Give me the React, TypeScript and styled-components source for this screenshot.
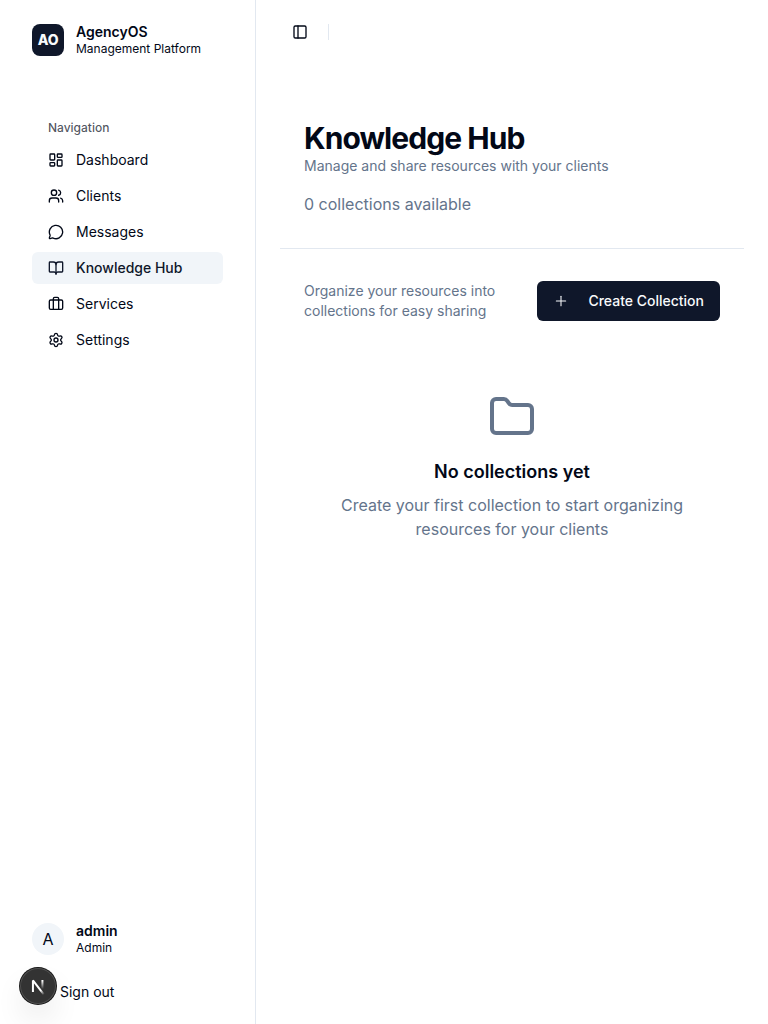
import React from "react";
import styled, { createGlobalStyle } from "styled-components";
import {
  BookOpen,
  Briefcase,
  Folder,
  LayoutDashboard,
  MessageCircle,
  PanelLeft,
  Plus,
  Settings,
  Users,
} from "lucide-react";

const ink = "#020817";
const navy = "#0f172a";
const muted = "#64748b";
const soft = "#f1f5f9";
const line = "#e2e8f0";

const GlobalStyle = createGlobalStyle`
  *, *::before, *::after { box-sizing: border-box; }
  body {
    margin: 0;
    background: #fff;
    color: ${ink};
    font-family: Inter, "Liberation Sans", sans-serif;
    font-size: 16px;
    line-height: 24px;
  }
  h1, h3, p { margin: 0; }
  button { font: inherit; border: 0; background: none; color: inherit; padding: 0; cursor: pointer; }
`;

const Layout = styled.div`
  display: flex;
  height: 100vh;
  overflow: hidden;
`;

const Sidebar = styled.aside`
  display: flex;
  flex-direction: column;
  flex: 0 0 256px;
  padding: 24px 32px 16px;
  border-right: 1px solid #e2e8f0;
`;

const Identity = styled.div`
  display: flex;
  align-items: center;
  gap: 12px;
  height: 32px;
`;

const Logo = styled.div`
  display: grid;
  place-items: center;
  width: 32px;
  height: 32px;
  border-radius: 8px;
  background: ${navy};
  color: #f8fafc;
  font-size: 14px;
  font-weight: 800;
  letter-spacing: -0.3px;
`;

const Avatar = styled.div`
  display: grid;
  place-items: center;
  width: 32px;
  height: 32px;
  border-radius: 50%;
  background: ${soft};
`;

const IdentityText = styled.div`
  display: flex;
  flex-direction: column;
  font-size: 12px;
  line-height: 16px;
`;

const IdentityName = styled.span`
  font-size: 14px;
  line-height: 17.5px;
  font-weight: 600;
`;

const NavLabel = styled.div`
  margin-top: 56px;
  padding: 0 16px;
  height: 32px;
  font-size: 12px;
  font-weight: 500;
  line-height: 32px;
  color: rgba(2, 8, 23, 0.7);
`;

const NavList = styled.nav`
  display: flex;
  flex-direction: column;
  gap: 4px;
`;

const NavItem = styled.button<{ $active?: boolean }>`
  display: flex;
  align-items: center;
  gap: 12px;
  height: 32px;
  padding: 0 16px;
  border-radius: 6px;
  font-size: 14px;
  font-weight: ${(p) => (p.$active ? 500 : 400)};
  color: ${(p) => (p.$active ? navy : ink)};
  background: ${(p) => (p.$active ? soft : "transparent")};
`;

const Account = styled.div`
  display: flex;
  flex-direction: column;
  gap: 21px;
  margin-top: auto;
`;

const SignOut = styled.button`
  height: 32px;
  padding-left: 28px;
  text-align: left;
  font-size: 14px;
`;

const Main = styled.main`
  flex: 1;
  min-width: 0;
`;

const TopBar = styled.header`
  display: flex;
  align-items: center;
  gap: 14px;
  height: 64px;
  padding-left: 30px;
`;

const PanelToggle = styled.button`
  display: grid;
  place-items: center;
  width: 28px;
  height: 28px;
`;

const Divider = styled.div`
  width: 1px;
  height: 16px;
  background: ${line};
`;

const Content = styled.div`
  padding: 32px 24px;
`;

const PageHeader = styled.section`
  padding: 24px 24px 32px;
  border-bottom: 1px solid ${line};
`;

const Title = styled.h1`
  font-size: 30px;
  line-height: 36px;
  font-weight: 700;
  letter-spacing: -0.93px;
`;

const Note = styled.p`
  font-size: 14px;
  line-height: 20px;
  color: ${muted};
`;

const Count = styled.p`
  margin-top: 16px;
  color: ${muted};
`;

const ActionRow = styled.section`
  display: flex;
  align-items: center;
  justify-content: space-between;
  gap: 24px;
  padding: 32px 24px;
`;

const CreateButton = styled.button`
  display: flex;
  align-items: center;
  flex-shrink: 0;
  gap: 19.5px;
  height: 40px;
  padding: 0 16px;
  border-radius: 6px;
  background: ${navy};
  color: #f8fafc;
  font-size: 14px;
  font-weight: 500;
`;

const EmptyState = styled.section`
  display: flex;
  flex-direction: column;
  align-items: center;
  padding-top: 40px;
  text-align: center;
`;

const EmptyTitle = styled.h3`
  margin: 17px 0 7px;
  font-size: 18px;
  line-height: 28px;
  font-weight: 600;
`;

const EmptyText = styled.p`
  max-width: 384px;
  color: ${muted};
`;

const DevBadge = styled.button`
  position: fixed;
  left: 20px;
  bottom: 20px;
  width: 36px;
  height: 36px;
  border-radius: 50%;
  background: #333;
  box-shadow: 0 0 0 1px #171717, inset 0 0 0 1px rgba(255, 255, 255, 0.14),
    0 16px 32px -8px rgba(0, 0, 0, 0.24);
  svg { display: block; }
`;

const navigation = [
  { label: "Dashboard", icon: LayoutDashboard },
  { label: "Clients", icon: Users },
  { label: "Messages", icon: MessageCircle },
  { label: "Knowledge Hub", icon: BookOpen, active: true },
  { label: "Services", icon: Briefcase },
  { label: "Settings", icon: Settings },
];

function NextMark() {
  return (
    <svg width="36" height="36" viewBox="0 0 36 36" fill="none">
      <defs>
        <linearGradient id="diagonal" x1="9.96" y1="11.12" x2="15.48" y2="17.97" gradientUnits="userSpaceOnUse">
          <stop stopColor="#fff" />
          <stop offset="0.604" stopColor="#fff" stopOpacity="0" />
        </linearGradient>
        <linearGradient id="stem" x1="11.82" y1="1.4" x2="11.79" y2="9.63" gradientUnits="userSpaceOnUse">
          <stop stopColor="#fff" />
          <stop offset="1" stopColor="#fff" stopOpacity="0" />
        </linearGradient>
      </defs>
      <g transform="translate(10.6 11.4)" strokeWidth="2">
        <path d="M13.3 15.2L2.34 1V12.6" strokeLinejoin="bevel" stroke="url(#diagonal)" />
        <path d="M11.825 0.6V12.6" stroke="url(#stem)" />
      </g>
    </svg>
  );
}

export default function App() {
  return (
    <>
      <GlobalStyle />
      <Layout>
        <Sidebar>
          <Identity>
            <Logo>AO</Logo>
            <IdentityText>
              <IdentityName>AgencyOS</IdentityName>
              Management Platform
            </IdentityText>
          </Identity>
          <NavLabel>Navigation</NavLabel>
          <NavList>
            {navigation.map(({ label, icon: Icon, active }) => (
              <NavItem key={label} $active={active}>
                <Icon size={16} />
                {label}
              </NavItem>
            ))}
          </NavList>
          <Account>
            <Identity>
              <Avatar>A</Avatar>
              <IdentityText>
                <IdentityName>admin</IdentityName>
                Admin
              </IdentityText>
            </Identity>
            <SignOut>Sign out</SignOut>
          </Account>
        </Sidebar>
        <Main>
          <TopBar>
            <PanelToggle aria-label="Toggle sidebar">
              <PanelLeft size={16} />
            </PanelToggle>
            <Divider />
          </TopBar>
          <Content>
            <PageHeader>
              <Title>Knowledge Hub</Title>
              <Note>Manage and share resources with your clients</Note>
              <Count>0 collections available</Count>
            </PageHeader>
            <ActionRow>
              <Note>Organize your resources into collections for easy sharing</Note>
              <CreateButton>
                <Plus size={16} strokeWidth={1.6} />
                Create Collection
              </CreateButton>
            </ActionRow>
            <EmptyState>
              <Folder size={48} color={muted} />
              <EmptyTitle>No collections yet</EmptyTitle>
              <EmptyText>Create your first collection to start organizing resources for your clients</EmptyText>
            </EmptyState>
          </Content>
        </Main>
      </Layout>
      <DevBadge aria-label="Open developer tools">
        <NextMark />
      </DevBadge>
    </>
  );
}
